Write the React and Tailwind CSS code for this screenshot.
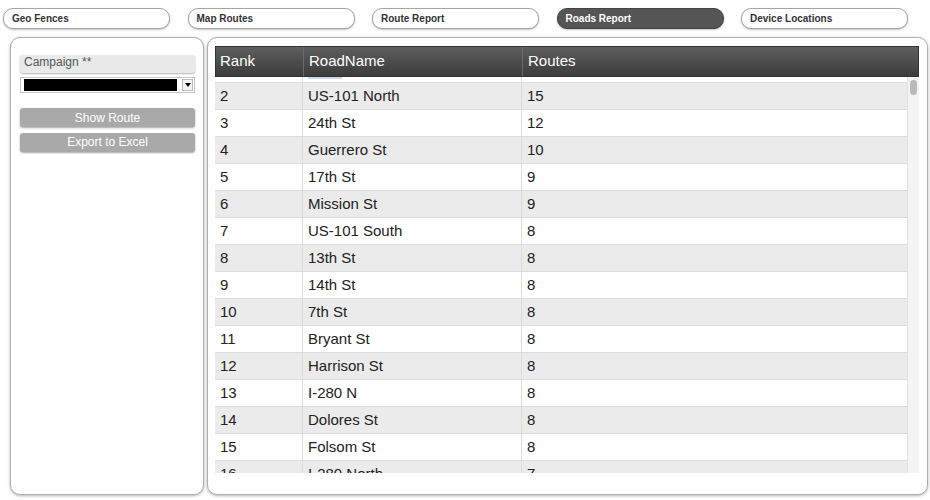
import React, { useState } from 'react';

const TABS = ['Geo Fences', 'Map Routes', 'Route Report', 'Roads Report', 'Device Locations'];

const ROWS = [
  [2, 'US-101 North', 15],
  [3, '24th St', 12],
  [4, 'Guerrero St', 10],
  [5, '17th St', 9],
  [6, 'Mission St', 9],
  [7, 'US-101 South', 8],
  [8, '13th St', 8],
  [9, '14th St', 8],
  [10, '7th St', 8],
  [11, 'Bryant St', 8],
  [12, 'Harrison St', 8],
  [13, 'I-280 N', 8],
  [14, 'Dolores St', 8],
  [15, 'Folsom St', 8],
  [16, 'I-280 North', 7],
];

function Tab({ label, active, onClick }) {
  return (
    <button
      onClick={onClick}
      className={`w-[167px] h-[21px] rounded-[10px] border text-left pl-[8px] text-[10px] font-bold shadow-[0_1px_2px_rgba(0,0,0,0.25)] ${
        active
          ? 'bg-[#555555] border-[#444444] text-white'
          : 'bg-white border-[#a5a5a5] text-[#333333]'
      }`}
    >
      {label}
    </button>
  );
}

export default function App() {
  const [tab, setTab] = useState('Roads Report');

  return (
    <div className="w-[930px] h-[500px] bg-white overflow-hidden font-['Liberation_Sans',Arial,sans-serif]">
      {/* Tabs */}
      <div className="flex gap-[17.5px] ml-[3px] pt-[8px]">
        {TABS.map(t => (
          <Tab key={t} label={t} active={t === tab} onClick={() => setTab(t)} />
        ))}
      </div>

      <div className="flex gap-[3px] pl-[10px] mt-[8px]">
        {/* Left panel */}
        <div className="w-[194px] h-[458px] rounded-[10px] border border-[#b0b0b0] bg-white shadow-[0_1px_3px_rgba(0,0,0,0.3)] pt-[17px] pl-[9px] pr-[8px]">
          <div className="h-[18px] rounded-[3px] bg-[#e9e9e9] shadow-[0_1px_2px_rgba(0,0,0,0.3)] text-[12px] text-[#555555] pl-[4px] leading-[15px]">
            Campaign **
          </div>
          <div className="mt-[4px] h-[16px] border border-[#c5c5c5] bg-white flex items-center pl-[3px] pr-[1px]">
            <div className="w-[153px] h-[12px] bg-black" />
            <div className="ml-auto w-[11px] h-[12px] border border-[#bbbbbb] bg-[#f3f3f3] flex items-center justify-center">
              <svg width="6" height="4" viewBox="0 0 6 4"><path d="M0 0h6L3 4z" fill="#000" /></svg>
            </div>
          </div>
          <button className="mt-[15px] w-full h-[19px] rounded-[3px] bg-[#a9a9a9] text-white text-[12px] leading-[16px] shadow-[0_1px_2px_rgba(0,0,0,0.35)]">
            Show Route
          </button>
          <button className="mt-[4px] w-full h-[19px] rounded-[3px] bg-[#a9a9a9] text-white text-[12px] leading-[16px] shadow-[0_1px_2px_rgba(0,0,0,0.35)]">
            Export to Excel
          </button>
        </div>

        {/* Right panel */}
        <div className="w-[721px] h-[458px] rounded-[10px] border border-[#b0b0b0] bg-white shadow-[0_1px_3px_rgba(0,0,0,0.3)] pt-[8px] pl-[7px] pr-[8px]">
          {/* Header */}
          <div className="flex h-[31px] bg-gradient-to-b from-[#5e5e5e] to-[#3c3c3c] text-white text-[15px] border border-[#333333]">
            <div className="w-[88px] pl-[4px] flex items-center border-r border-[#6a6a6a]">Rank</div>
            <div className="w-[219px] pl-[5px] flex items-center border-r border-[#6a6a6a]">RoadName</div>
            <div className="flex-1 pl-[5px] flex items-center">Routes</div>
          </div>

          {/* Body */}
          <div className="flex h-[396px] overflow-hidden">
            <div className="flex-1 overflow-hidden">
              {/* bottom sliver of the first, scrolled-off row */}
              <div className="flex h-[6px] border-b border-[#dcdcdc] bg-white">
                <div className="w-[88px] border-r border-[#dcdcdc]" />
                <div className="w-[219px] border-r border-[#dcdcdc] pl-[5px]">
                  <div className="w-[34px] h-[2px] bg-[#c9daf0]" />
                </div>
                <div className="flex-1" />
              </div>
              {ROWS.map(([rank, name, routes]) => (
                <div
                  key={rank}
                  className={`flex h-[27px] shrink-0 border-b border-[#dcdcdc] text-[15px] text-[#222222] ${
                    rank % 2 === 0 ? 'bg-[#ebebeb]' : 'bg-white'
                  }`}
                >
                  <div className="w-[88px] pl-[5px] flex items-center border-r border-[#dcdcdc]">{rank}</div>
                  <div className="w-[219px] pl-[5px] flex items-center border-r border-[#dcdcdc]">{name}</div>
                  <div className="flex-1 pl-[5px] flex items-center">{routes}</div>
                </div>
              ))}
            </div>
            {/* Scrollbar */}
            <div className="w-[12px] bg-[#f4f4f4] border-l border-[#e2e2e2] pt-[3px] flex justify-center">
              <div className="w-[7px] h-[15px] rounded-full bg-[#b9b9b9]" />
            </div>
          </div>
        </div>
      </div>
    </div>
  );
}
